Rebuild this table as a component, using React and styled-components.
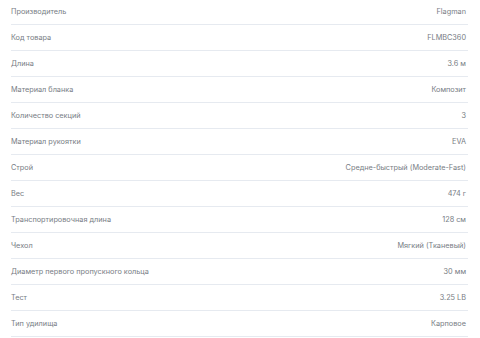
import React from "react";
import styled, { createGlobalStyle } from "styled-components";

const GlobalStyle = createGlobalStyle`
  html, body {
    margin: 0;
    padding: 0;
    background: #ffffff;
  }
  body {
    font-family: Inter, "Noto Sans", "Liberation Sans", sans-serif;
    overflow: hidden;
  }
`;

const Table = styled.div`
  display: flex;
  flex-direction: column;
  margin: -1px 12px 0 11px;
`;

const Row = styled.div`
  display: flex;
  justify-content: space-between;
  align-items: center;
  height: 25px;
  border-bottom: 1px solid #e6eaf0;
  font-size: 7.3px;
  color: #777c84;
`;

const Label = styled.span`
  padding-left: 0;
`;

const Value = styled.span`
  padding-right: 2px;
  text-align: right;
`;

const specs = [
  ["Производитель", "Flagman"],
  ["Код товара", "FLMBC360"],
  ["Длина", "3.6 м"],
  ["Материал бланка", "Композит"],
  ["Количество секций", "3"],
  ["Материал рукоятки", "EVA"],
  ["Строй", "Средне-быстрый (Moderate-Fast)"],
  ["Вес", "474 г"],
  ["Транспортировочная длина", "128 см"],
  ["Чехол", "Мягкий (Тканевый)"],
  ["Диаметр первого пропускного кольца", "30 мм"],
  ["Тест", "3.25 LB"],
  ["Тип удилища", "Карповое"],
];

export default function App() {
  return (
    <>
      <GlobalStyle />
      <Table>
        {specs.map(([label, value]) => (
          <Row key={label}>
            <Label>{label}</Label>
            <Value>{value}</Value>
          </Row>
        ))}
      </Table>
    </>
  );
}
